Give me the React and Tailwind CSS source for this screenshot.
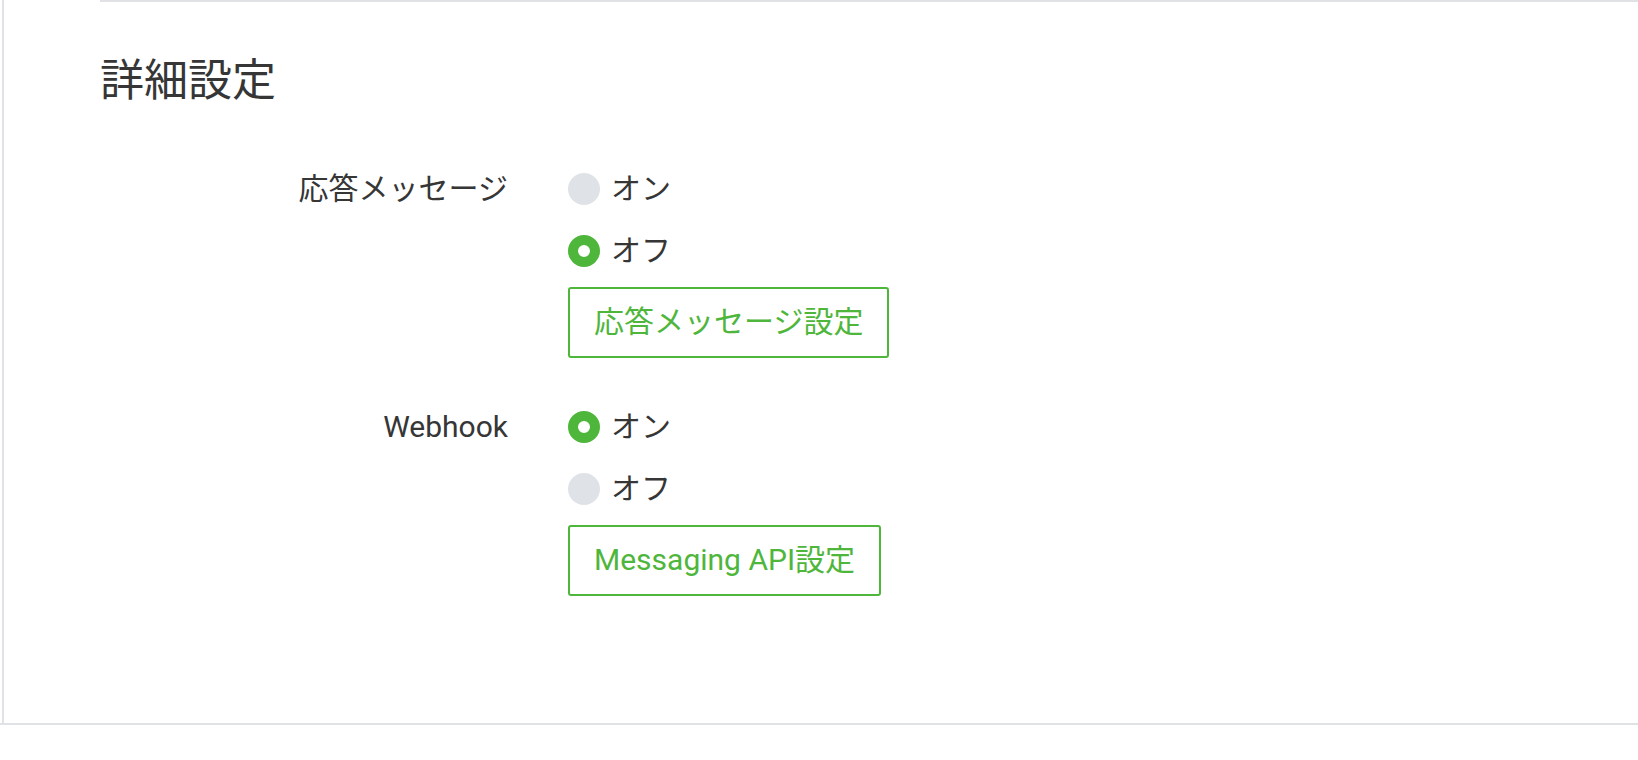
import React from "react";

const font = { fontFamily: 'Roboto, "Noto Sans CJK JP", sans-serif' };

function Radio({ checked, label }) {
  return (
    <div className="h-[62px] flex items-center gap-[11px]">
      {checked ? (
        <span className="w-8 h-8 rounded-full border-[10px] border-[#4fb63c] bg-white box-border" />
      ) : (
        <span className="w-8 h-8 rounded-full bg-[#dfe2e7]" />
      )}
      <span className="text-[30px] leading-none text-[#363636]">{label}</span>
    </div>
  );
}

function Btn({ children }) {
  return (
    <div className="mt-[5px] inline-flex h-[71px] items-center pb-[2px] px-[24px] border-2 border-[#4fb63c] rounded-[3px] text-[30px] leading-none text-[#4fb63c] self-start">
      {children}
    </div>
  );
}

function Row({ label, a, b, button }) {
  return (
    <>
      <div className="h-[62px] flex items-center justify-end text-[30px] leading-none text-[#363636]">
        {label}
      </div>
      <div className="flex flex-col">
        <Radio checked={a} label="オン" />
        <Radio checked={b} label="オフ" />
        <Btn>{button}</Btn>
      </div>
    </>
  );
}

export default function App() {
  return (
    <div className="w-[1638px] h-[760px] bg-white" style={font}>
      <div className="h-[725px] border-b-2 border-[#e1e2e5]">
        <div className="ml-[2px] h-full border-l-2 border-[#e1e2e5] pl-[96px]">
          <div className="border-t-2 border-[#e1e2e5]">
            <div className="pt-[57px] text-[44px] leading-[44px] text-[#363636]">詳細設定</div>
            <div className="mt-[55px] grid grid-cols-[408px_1fr] gap-x-[60px] gap-y-[38px]">
              <Row label="応答メッセージ" a={false} b={true} button="応答メッセージ設定" />
              <Row label="Webhook" a={true} b={false} button="Messaging API設定" />
            </div>
          </div>
        </div>
      </div>
    </div>
  );
}
